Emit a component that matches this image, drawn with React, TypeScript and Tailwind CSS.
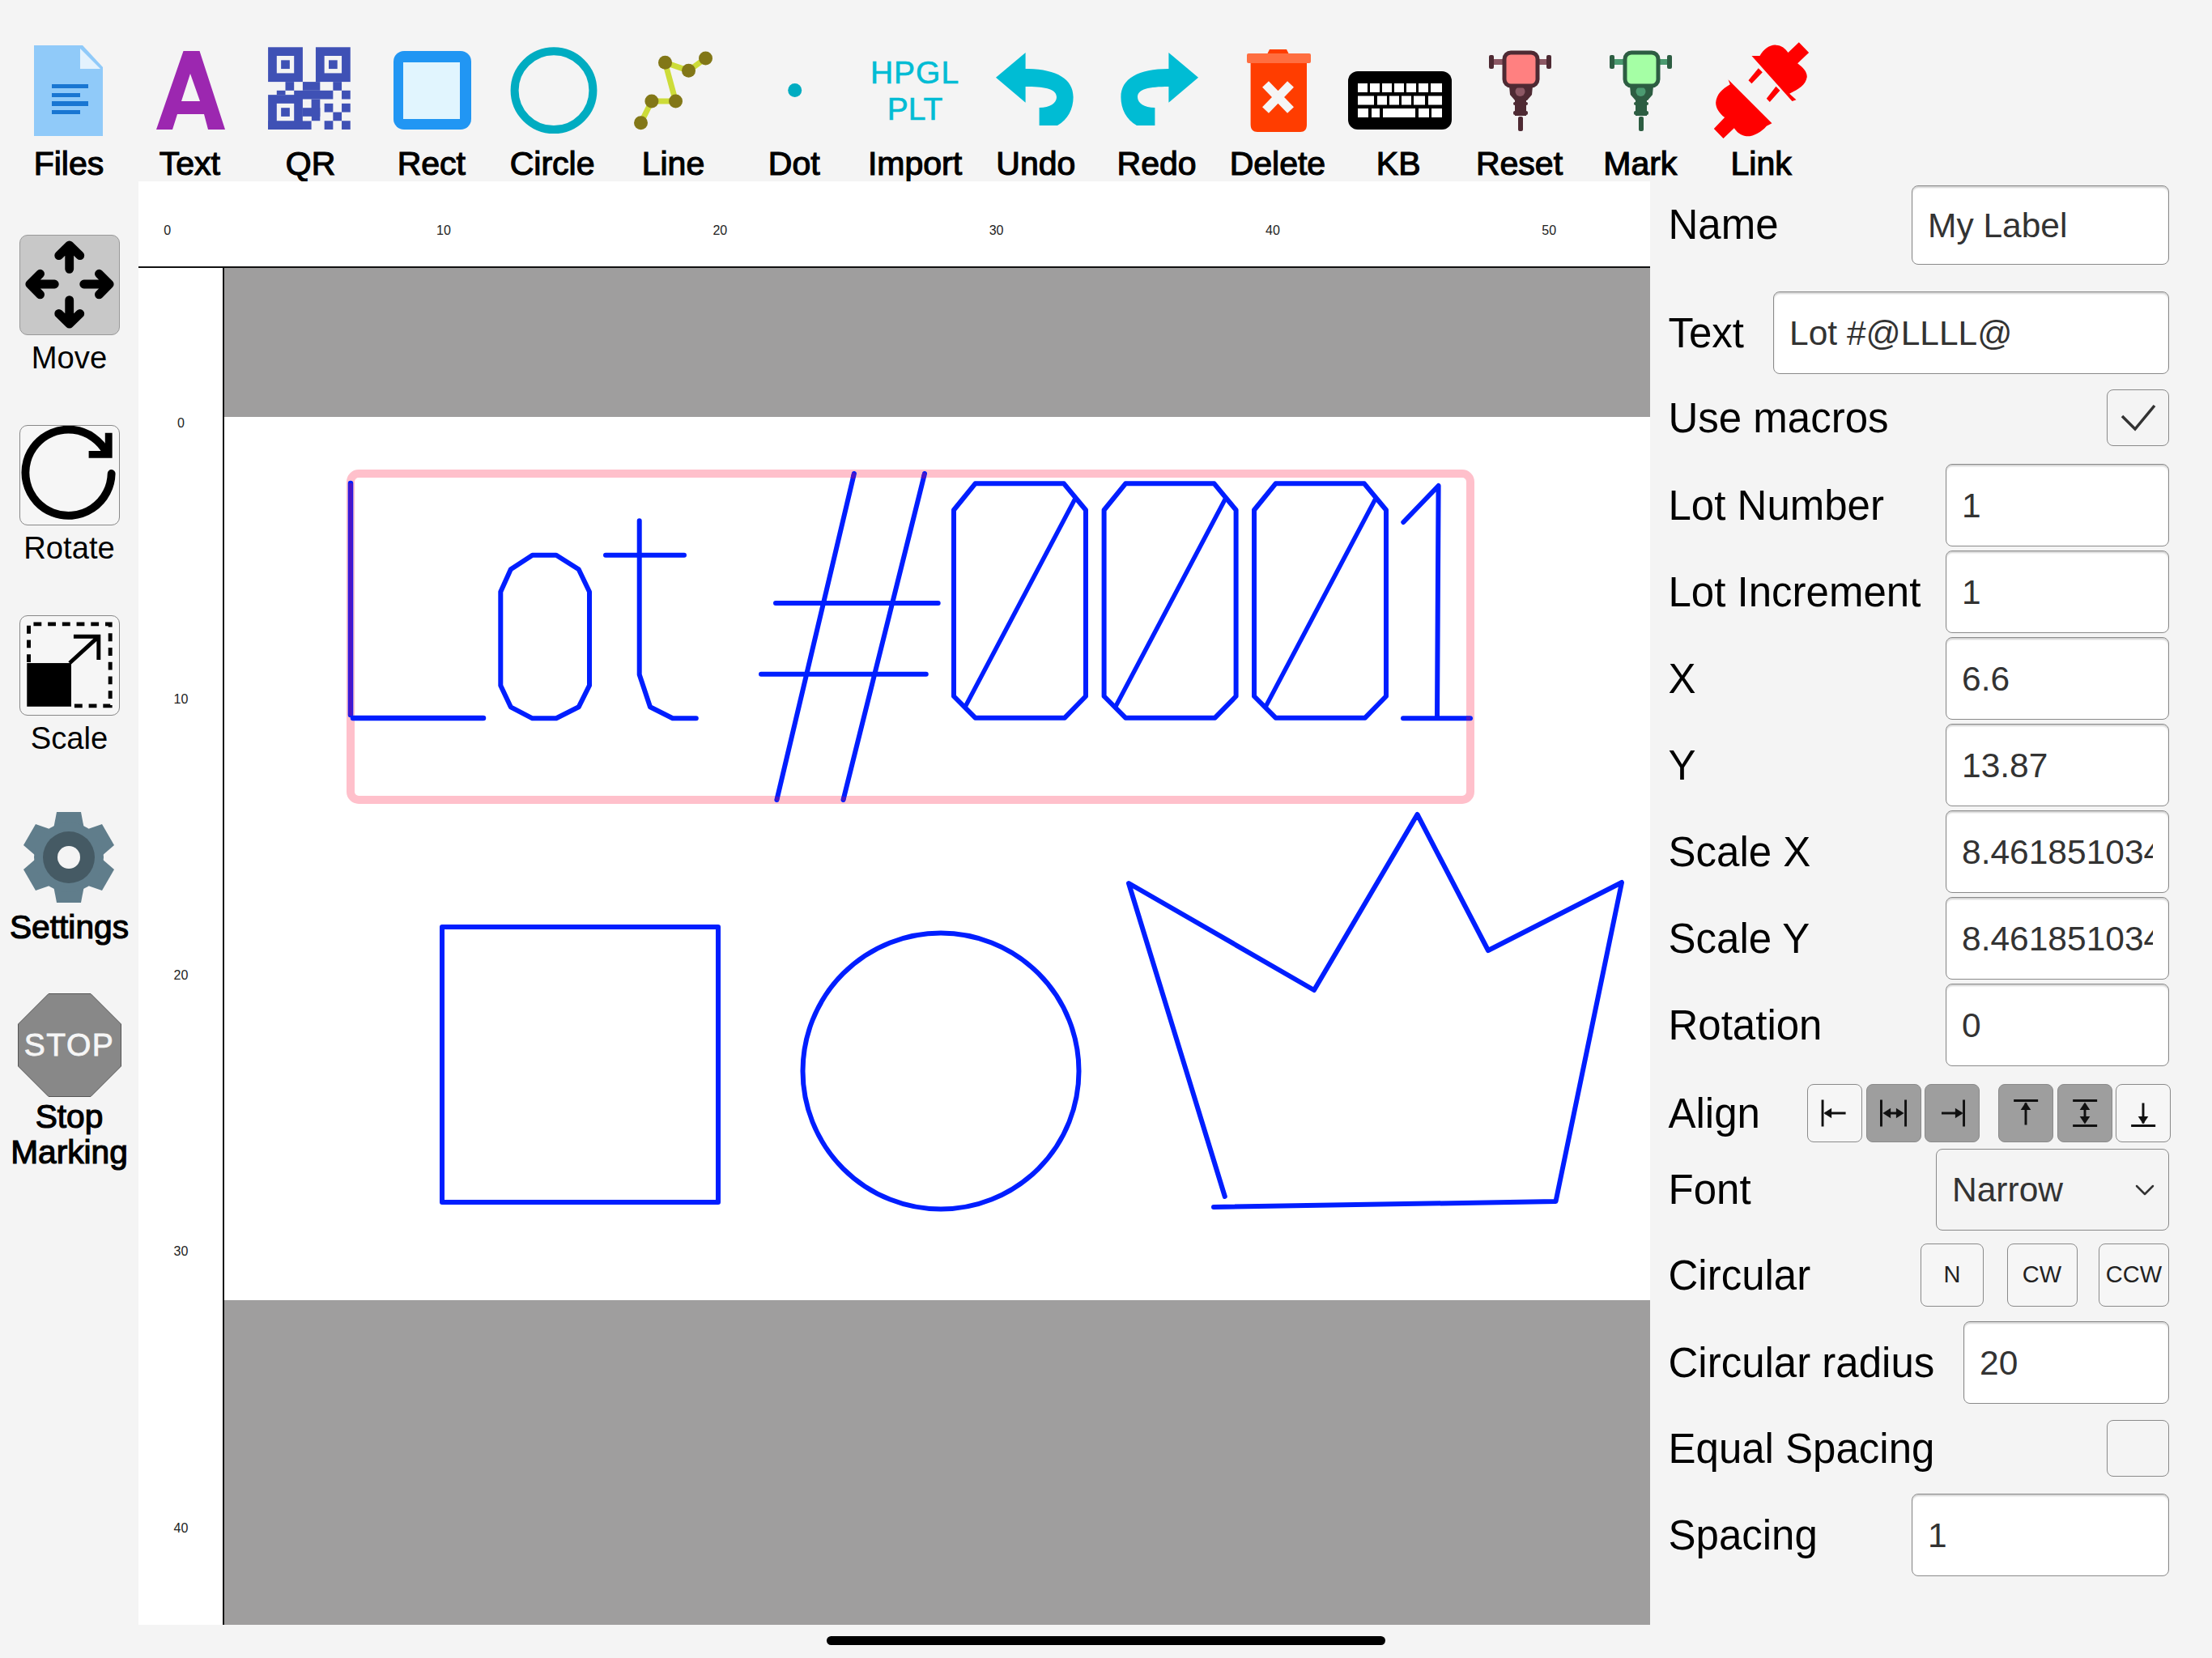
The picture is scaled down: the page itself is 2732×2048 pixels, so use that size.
import { ChevronDown } from 'lucide-react';
import type { ReactNode } from 'react';

const BLUE = '#001eff';
const PURPLE = '#4a14c8';

// x, y, w, h in QR cells (19 x 19 grid)
const qrCells = [
  [0, 0, 8, 8], [11, 0, 8, 8], [4, 8, 2, 2], [8, 8, 4, 2], [15, 8, 2, 2], [2, 10, 2, 1], [6, 10, 9, 2],
  [17, 10, 2, 2], [0, 11, 8, 8], [10, 12, 2, 5], [8, 14, 4, 2], [13, 13, 2, 2], [17, 13, 2, 2], [15, 15, 2, 2],
  [0, 17, 10, 2], [13, 17, 2, 2], [17, 17, 2, 2],
];
const qrHoles = [[2, 2, 4, 4], [13, 2, 4, 4], [2, 13, 4, 4], [8, 16, 2, 1]];
const qrDots = [[3, 3, 2, 2], [14, 3, 2, 2], [3, 14, 2, 2]];

function Icon({ children }: { children: ReactNode }) {
  return (
    <svg viewBox="0 0 120 120" className="w-[120px] h-[120px] overflow-visible">
      {children}
    </svg>
  );
}

function Jackhammer({ fill, dark, mid }: { fill: string; dark: string; mid: string }) {
  return (
    <div className="blur-[0.6px]">
      <Icon>
        <rect x="22" y="21" width="18" height="7" fill={mid} />
        <rect x="22" y="16" width="6" height="17" rx="2" fill={dark} />
        <rect x="82" y="21" width="17" height="7" fill={mid} />
        <rect x="93" y="16" width="6" height="17" rx="2" fill={dark} />
        <path d="M47 54 H76 L75 65 L69 72 H54 L48 65 Z" fill={dark} />
        <circle cx="60.5" cy="61" r="6" fill={mid} />
        <rect x="41" y="13" width="41" height="41" rx="8" fill={fill} stroke={dark} strokeWidth="5" />
        <rect x="54" y="71" width="14" height="20" fill={dark} />
        <rect x="52" y="74" width="18" height="4" rx="2" fill={dark} />
        <rect x="52" y="85" width="18" height="5" rx="2" fill={dark} />
        <rect x="58" y="92" width="6" height="18" rx="2" fill={dark} />
      </Icon>
    </div>
  );
}

const keyRows = [
  [[10, 12], [25, 12], [40, 12], [55, 12], [70, 12], [85, 12], [100, 14]],
  [[10, 20], [34, 12], [49, 12], [64, 12], [79, 14], [97, 17]],
  [[10, 13], [27, 10], [41, 40], [85, 13], [101, 13]],
];

const tools: { label: string; icon: ReactNode }[] = [
  {
    label: 'Files',
    icon: (
      <Icon>
        <path d="M17 4 H77 L102 31 V116 H17 Z" fill="#90caf9" />
        <path d="M74 8 V33 H99 Z" fill="#e3f2fd" />
        <path d="M39 52 H84 V57 H39 Z M39 63 H74 V68 H39 Z M39 73 H84 V79 H39 Z M39 84 H74 V89 H39 Z" fill="#1976d2" />
      </Icon>
    ),
  },
  {
    label: 'Text',
    icon: (
      <Icon>
        <path fillRule="evenodd" d="M52.5 11 H72.5 L104 108 H83 L78 89 H45 L39 108 H19 Z M61 39 L50 73 H73 Z" fill="#9c27b0" />
      </Icon>
    ),
  },
  {
    label: 'QR',
    icon: (
      <Icon>
        <g transform="translate(7.1 6.3) scale(5.35)">
          {qrCells.map(([x, y, w, h], i) => (
            <rect key={i} x={x} y={y} width={w} height={h} fill="#3f51b5" />
          ))}
          {qrHoles.map(([x, y, w, h], i) => (
            <rect key={i} x={x} y={y} width={w} height={h} fill="#f4f4f4" />
          ))}
          {qrDots.map(([x, y, w, h], i) => (
            <rect key={i} x={x} y={y} width={w} height={h} fill="#3f51b5" />
          ))}
        </g>
      </Icon>
    ),
  },
  {
    label: 'Rect',
    icon: (
      <Icon>
        <rect x="13" y="11" width="96" height="97" rx="13" fill="#2196f3" />
        <rect x="25" y="25" width="70" height="70" fill="#e1f5fe" />
      </Icon>
    ),
  },
  {
    label: 'Circle',
    icon: (
      <Icon>
        <circle cx="62" cy="59.7" r="48.4" fill="none" stroke="#00acc1" strokeWidth="10" />
      </Icon>
    ),
  },
  {
    label: 'Line',
    icon: (
      <Icon>
        <polyline points="20.5,99.7 33.9,73 63.5,73 50.5,25.3 79.5,35.3 100.5,20" fill="none" stroke="#cddc39" strokeWidth="7" />
        {[[20.5, 99.7], [33.9, 73], [63.5, 73], [50.5, 25.3], [79.5, 35.3], [100.5, 20]].map(([cx, cy], i) => (
          <circle key={i} cx={cx} cy={cy} r="8.5" fill="#827717" />
        ))}
      </Icon>
    ),
  },
  {
    label: 'Dot',
    icon: (
      <Icon>
        <circle cx="60.7" cy="59.5" r="8.5" fill="#00acc1" />
      </Icon>
    ),
  },
  {
    label: 'Import',
    icon: (
      <div className="w-[120px] h-[120px] flex flex-col items-center justify-center text-[39px] leading-[45px] text-[#00bcd4] [-webkit-text-stroke:0.6px_#00bcd4]">
        <span className="tracking-[1px]">HPGL</span>
        <span>PLT</span>
      </div>
    ),
  },
  {
    label: 'Undo',
    icon: (
      <Icon>
        <path d="M11 43.7 L47.6 13 V33 C85 33 106.6 45 106.6 68 C106.6 82 100 96 87 103 H64.6 V81 C78 81 86 75 86 68 C86 58 72 55 47.6 55 V74.7 Z" fill="#00bcd4" />
      </Icon>
    ),
  },
  {
    label: 'Redo',
    icon: (
      <Icon>
        <path transform="translate(122 0) scale(-1 1)" d="M11 43.7 L47.6 13 V33 C85 33 106.6 45 106.6 68 C106.6 82 100 96 87 103 H64.6 V81 C78 81 86 75 86 68 C86 58 72 55 47.6 55 V74.7 Z" fill="#00bcd4" />
      </Icon>
    ),
  },
  {
    label: 'Delete',
    icon: (
      <Icon>
        <path d="M50 9 H71 L74 15 H47 Z" fill="#ff3d00" />
        <path d="M26.6 24 H96 V102 C96 108 93 111 88 111 H35 C30 111 26.6 108 26.6 102 Z" fill="#ff3d00" />
        <rect x="22" y="14" width="79" height="12" rx="2" fill="#ff6e40" />
        <path d="M45 52 L76 84 M76 52 L45 84" stroke="#f5f5f5" strokeWidth="11" fill="none" />
      </Icon>
    ),
  },
  {
    label: 'KB',
    icon: (
      <Icon>
        <rect x="-2" y="36" width="128" height="72" rx="12" fill="#000" />
        {keyRows.map((row, r) =>
          row.map(([x, w], i) => <rect key={`${r}-${i}`} x={x} y={51 + r * 15.5} width={w} height="11" fill="#fff" />),
        )}
      </Icon>
    ),
  },
  { label: 'Reset', icon: <Jackhammer fill="#ff8080" dark="#4e2a33" mid="#8c5864" /> },
  { label: 'Mark', icon: <Jackhammer fill="#a5ffa5" dark="#2d5d42" mid="#4b9a70" /> },
  {
    label: 'Link',
    icon: (
      <Icon>
        <g transform="translate(-286.5 -7) scale(0.3333)" fill="#ff0000">
          <path d="M1005 72 L1035 72 C1050 45 1075 30 1095 32 C1115 32 1130 45 1140 60 L1180 22 L1217 60 L1175 100 C1195 115 1210 130 1210 150 C1205 180 1180 195 1145 212 L1170 235 L1155 240 Z" />
          <path d="M1030 118 L1045 133 L1005 175 L993 163 Z M1095 185 L1110 200 L1072 243 L1060 230 Z" />
          <path d="M918 160 L1080 322 L1060 332 C1040 355 1010 372 985 370 C965 368 950 355 940 340 L900 378 L865 342 L905 300 C885 285 872 265 872 245 C875 215 895 195 925 178 Z" />
        </g>
      </Icon>
    ),
  },
];

function MoveIcon() {
  return (
    <svg viewBox="0 0 124 124" className="w-full h-full">
      <path
        d="M61.7 42 V12 M48.5 25 L61.7 12 L75 25 M43 61 H12 M25 48 L12 61 L25 74 M80 61 H112 M99 48 L112 61 L99 74 M61.7 81 V111 M48.5 98 L61.7 111 L75 98"
        fill="none"
        stroke="#000"
        strokeWidth="11"
        strokeLinecap="round"
        strokeLinejoin="round"
      />
    </svg>
  );
}

function RotateIcon() {
  return (
    <svg viewBox="0 0 124 124" className="w-full h-full">
      <path d="M114.5 60 A54 54 0 1 1 108 33" fill="none" stroke="#000" strokeWidth="10" strokeLinecap="round" />
      <path d="M111 9 V36 H86" fill="none" stroke="#000" strokeWidth="9" />
    </svg>
  );
}

function ScaleIcon() {
  return (
    <svg viewBox="0 0 124 124" className="w-full h-full">
      <path d="M10.7 58 V10 H113 V112.7 H64" fill="none" stroke="#000" strokeWidth="5" strokeDasharray="10 8" />
      <rect x="8.4" y="59" width="55.6" height="54.6" fill="#000" />
      <path d="M62 59 L98 26 M67 25.6 H98.4 V55" fill="none" stroke="#000" strokeWidth="5" />
    </svg>
  );
}

function GearIcon() {
  return (
    <svg viewBox="0 0 124 124" className="w-full h-full">
      <g transform="translate(62 64)" fill="#607d8b">
        {[0, 60, 120, 180, 240, 300].map((a) => (
          <path key={a} transform={`rotate(${a})`} d="M-15 -56 H15 L19 -35 H-19 Z" />
        ))}
        <circle r="43" />
        <circle r="32" fill="#455a64" />
        <circle r="14" fill="#f4f4f4" />
      </g>
    </svg>
  );
}

const AlignPaths: Record<string, string> = {
  left: 'M18.6 19 V53 M22 36 H48',
  hcenter: 'M18 19 V53 M49 19 V53 M24 36 H43',
  right: 'M49 19 V53 M20.6 36 H46',
  top: 'M18.7 20 H49.6 M34 23 V51',
  vcenter: 'M18.7 20 H49.6 M18.7 52 H49.6 M34 25 V47',
  bottom: 'M18.7 52 H49.6 M34 23 V49',
};
const AlignHeads: Record<string, string> = {
  left: 'M20 36 L30 29.5 V42.5 Z',
  hcenter: 'M20 36 L30 29.5 V42.5 Z M47 36 L37 29.5 V42.5 Z',
  right: 'M48 36 L38 29.5 V42.5 Z',
  top: 'M34 22 L27.5 32 H40.5 Z',
  vcenter: 'M34 22 L27.5 32 H40.5 Z M34 50 L27.5 40 H40.5 Z',
  bottom: 'M34 50 L27.5 40 H40.5 Z',
};

function AlignButton({ name, active }: { name: string; active?: boolean }) {
  return (
    <button
      className={`w-[68px] h-[72px] rounded-[8px] border border-[#8a8a8a] ${active ? 'bg-[#9e9e9e]' : 'bg-[#f6f6f6]'}`}
    >
      <svg viewBox="0 0 68 72" className="w-full h-full">
        <path d={AlignPaths[name]} stroke="#111" strokeWidth="3" fill="none" />
        <path d={AlignHeads[name]} fill="#111" />
      </svg>
    </button>
  );
}

function Label({ children, className = '' }: { children: ReactNode; className?: string }) {
  return <span className={`text-[51px] leading-none text-black whitespace-nowrap ${className}`}>{children}</span>;
}

function Field({ label, value, width, height = 'h-[102px]', className = '' }: { label: string; value: string; width: string; height?: string; className?: string }) {
  return (
    <div className={`flex items-center justify-between ${className}`}>
      <Label>{label}</Label>
      <input
        readOnly
        value={value}
        className={`${width} ${height} px-[19px] pt-[2px] bg-white border border-[#8a8a8a] rounded-[8px] text-[42.5px] text-[#333] shadow-[inset_0_2px_2px_rgba(0,0,0,0.18)] outline-none`}
      />
    </div>
  );
}

function CheckRow({ label, checked, className = '' }: { label: string; checked?: boolean; className?: string }) {
  return (
    <div className={`flex items-center justify-between ${className}`}>
      <Label>{label}</Label>
      <div className="w-[77px] h-[70px] flex items-center justify-center rounded-[8px] border border-[#8a8a8a]">
        {checked && (
          <svg viewBox="0 0 44 34" className="w-[44px] h-[34px]">
            <path d="M2 15 L18 31 L42 2" fill="none" stroke="#333" strokeWidth="3.5" />
          </svg>
        )}
      </div>
    </div>
  );
}

function CircleButton({ text, width }: { text: string; width: string }) {
  return (
    <button className={`${width} h-[78px] rounded-[8px] border border-[#8a8a8a] bg-[#f6f6f6] text-[29px] text-[#222]`}>{text}</button>
  );
}

function Drawing() {
  const zeros = [0, 185.6, 371];
  return (
    <svg viewBox="277 331 1761 1676" className="absolute inset-0 w-full h-full">
      <rect x="433" y="585" width="1383" height="403" rx="10" fill="none" stroke="#ffc0cb" strokeWidth="10" />
      <g fill="none" stroke={BLUE} strokeWidth="6" strokeLinecap="round" strokeLinejoin="round">
        <path d="M433 597 V883 M436 887 H597" strokeWidth="6.5" />
        <path d="M618.3 731 V846.7 L630.8 873.3 L657.6 887.3 H687 L714.7 873.3 L728 846.7 V731 L714.7 703.3 L687 685.7 H657.6 L630.8 703.3 Z" />
        <path d="M789.7 643.3 V833.3 L803 873.3 L830.8 887.3 H859.8 M748 685.7 H845" />
        <path d="M1054.9 585 L959.4 988 M1142 585 L1041.5 988 M958 745 H1158.7 M940 832.7 H1143.8" />
        {zeros.map((dx) => (
          <g key={dx} transform={`translate(${dx} 0)`}>
            <path d="M1178 630 V860 L1204.5 886.7 H1315 L1341 860 V630 L1314 597.3 H1204.5 Z" />
            <path d="M1327.9 616 L1192 873.3" strokeWidth="5.5" />
          </g>
        ))}
        <path d="M1733.3 645 L1776.6 600 L1775 886.7" />
        <path d="M1733 887.3 H1816" />
        <path d="M546 1145 H887 V1485 H546 Z" />
        <circle cx="1162" cy="1323" r="170.5" />
        <path d="M1512.8 1478 L1394 1091 L1623 1223 L1750.5 1006 L1838 1174 L2003 1090 L1921.5 1484 L1499 1491" />
      </g>
      <g fill="none" stroke={PURPLE} strokeWidth="5">
        <path d="M433 597 V884 M1054.9 584 L1053 591 M1142 584 L1140 591 M960.4 984 L959.4 989 M1042.5 984 L1041.5 989 M1811 887.3 H1816" />
      </g>
    </svg>
  );
}

export default function App() {
  return (
    <div className="w-[2732px] h-[2048px] flex flex-col overflow-hidden bg-[#f4f4f4] font-['Liberation_Sans',sans-serif] text-black">
      <div className="h-[224px] shrink-0 flex pl-[10.3px] pt-[52px]">
        {tools.map((tool) => (
          <div key={tool.label} className="w-[149.3px] shrink-0 flex flex-col items-center">
            {tool.icon}
            <span className="mt-[7.5px] text-[41px] leading-[44px] [-webkit-text-stroke:1.2px_#000]">{tool.label}</span>
          </div>
        ))}
      </div>

      <div className="h-[1783px] shrink-0 flex">
        <div className="w-[171px] shrink-0 flex flex-col items-center pt-[66px]">
          <div className="h-[235px] flex flex-col items-center">
            <div className="w-[124px] h-[124px] rounded-[10px] border border-[#999] bg-[#c8c8c8]">
              <MoveIcon />
            </div>
            <span className="mt-[5.5px] text-[38.2px] leading-[44px]">Move</span>
          </div>
          <div className="h-[235px] flex flex-col items-center">
            <div className="w-[124px] h-[124px] rounded-[10px] border border-[#888] bg-[#f6f6f6]">
              <RotateIcon />
            </div>
            <span className="mt-[5.5px] text-[38.2px] leading-[44px]">Rotate</span>
          </div>
          <div className="h-[235px] flex flex-col items-center">
            <div className="w-[124px] h-[124px] rounded-[10px] border border-[#888] bg-[#f6f6f6]">
              <ScaleIcon />
            </div>
            <span className="mt-[5.5px] text-[38.2px] leading-[44px]">Scale</span>
          </div>
          <div className="h-[235px] flex flex-col items-center">
            <div className="w-[124px] h-[124px]">
              <GearIcon />
            </div>
            <span className="mt-[3.5px] text-[40.7px] leading-[44px] [-webkit-text-stroke:1.2px_#000]">Settings</span>
          </div>
          <div className="flex flex-col items-center">
            <div className="relative w-[128px] h-[128px] -mt-[3px]">
              <svg viewBox="0 0 128 128" className="w-full h-full">
                <polygon points="38,0.5 90,0.5 127.5,38 127.5,90 90,127.5 38,127.5 0.5,90 0.5,38" fill="#888" stroke="#555" />
              </svg>
              <span className="absolute inset-0 flex items-center justify-center text-[39px] tracking-[1.5px] text-[#f6f6f6] [-webkit-text-stroke:0.8px_#f6f6f6]">STOP</span>
            </div>
            <span className="mt-[1.5px] text-[40.7px] leading-[44.5px] text-center [-webkit-text-stroke:1.2px_#000]">
              Stop
              <br />
              Marking
            </span>
          </div>
        </div>

        <div className="w-[1867px] shrink-0 flex flex-col bg-white">
          <div className="h-[107px] shrink-0 border-b-2 border-[#111] pl-[35.7px] pt-[60.5px]">
            <div className="flex gap-[341.3px] h-0 items-center">
              {[0, 10, 20, 30, 40, 50].map((n) => (
                <span key={n} className="w-0 flex justify-center text-[16px] text-[#222]">{n}</span>
              ))}
            </div>
          </div>
          <div className="flex-1 flex min-h-0">
            <div className="w-[106px] shrink-0 border-r-2 border-[#111] pt-[191.5px] pl-[1px] flex flex-col items-center gap-[341.3px]">
              {[0, 10, 20, 30, 40].map((n) => (
                <span key={n} className="h-0 flex items-center text-[16px] text-[#222]">{n}</span>
              ))}
            </div>
            <div className="relative flex-1 flex flex-col">
              <div className="h-[184px] bg-[#9f9e9e]" />
              <div className="flex-1 bg-white" />
              <div className="h-[401px] bg-[#9f9e9e]" />
              <Drawing />
            </div>
          </div>
        </div>

        <div className="flex-1 pl-[22.5px] pr-[53px] pt-[4.5px] flex flex-col">
          <Field label="Name" value="My Label" width="w-[318px]" height="h-[98px]" />
          <Field label="Text" value="Lot #@LLLL@" width="w-[489px]" className="mt-[33.5px]" />
          <CheckRow label="Use macros" checked className="mt-[19px]" />
          <div className="mt-[22px] flex flex-col gap-[5px]">
            <Field label="Lot Number" value="1" width="w-[276px]" />
            <Field label="Lot Increment" value="1" width="w-[276px]" />
            <Field label="X" value="6.6" width="w-[276px]" />
            <Field label="Y" value="13.87" width="w-[276px]" />
            <Field label="Scale X" value="8.461851034" width="w-[276px]" />
            <Field label="Scale Y" value="8.461851034" width="w-[276px]" />
            <Field label="Rotation" value="0" width="w-[276px]" />
          </div>
          <div className="mt-[22px] flex items-center justify-between">
            <Label>Align</Label>
            <div className="flex -mr-[2px]">
              <div className="flex gap-[4.5px]">
                <AlignButton name="left" />
                <AlignButton name="hcenter" active />
                <AlignButton name="right" active />
              </div>
              <div className="flex gap-[4.5px] ml-[23px]">
                <AlignButton name="top" active />
                <AlignButton name="vcenter" active />
                <AlignButton name="bottom" />
              </div>
            </div>
          </div>
          <div className="mt-[8px] flex items-center justify-between">
            <Label>Font</Label>
            <div className="w-[288px] h-[101px] pl-[19px] pr-[9px] flex items-center justify-between rounded-[8px] border border-[#8a8a8a] text-[42.5px] text-[#333]">
              <span>Narrow</span>
              <ChevronDown size={40} strokeWidth={1.5} className="text-[#333]" />
            </div>
          </div>
          <div className="mt-[16px] flex items-center">
            <Label className="flex-1">Circular</Label>
            <CircleButton text="N" width="w-[78px]" />
            <div className="ml-[28.5px]">
              <CircleButton text="CW" width="w-[87px]" />
            </div>
            <div className="ml-[26.5px]">
              <CircleButton text="CCW" width="w-[87px]" />
            </div>
          </div>
          <Field label="Circular radius" value="20" width="w-[254px]" className="mt-[18px]" />
          <CheckRow label="Equal Spacing" className="mt-[20px]" />
          <Field label="Spacing" value="1" width="w-[318px]" className="mt-[21px]" />
        </div>
      </div>

      <div className="flex-1 flex justify-center pt-[14px]">
        <div className="w-[690px] h-[11px] rounded-full bg-black" />
      </div>
    </div>
  );
}
